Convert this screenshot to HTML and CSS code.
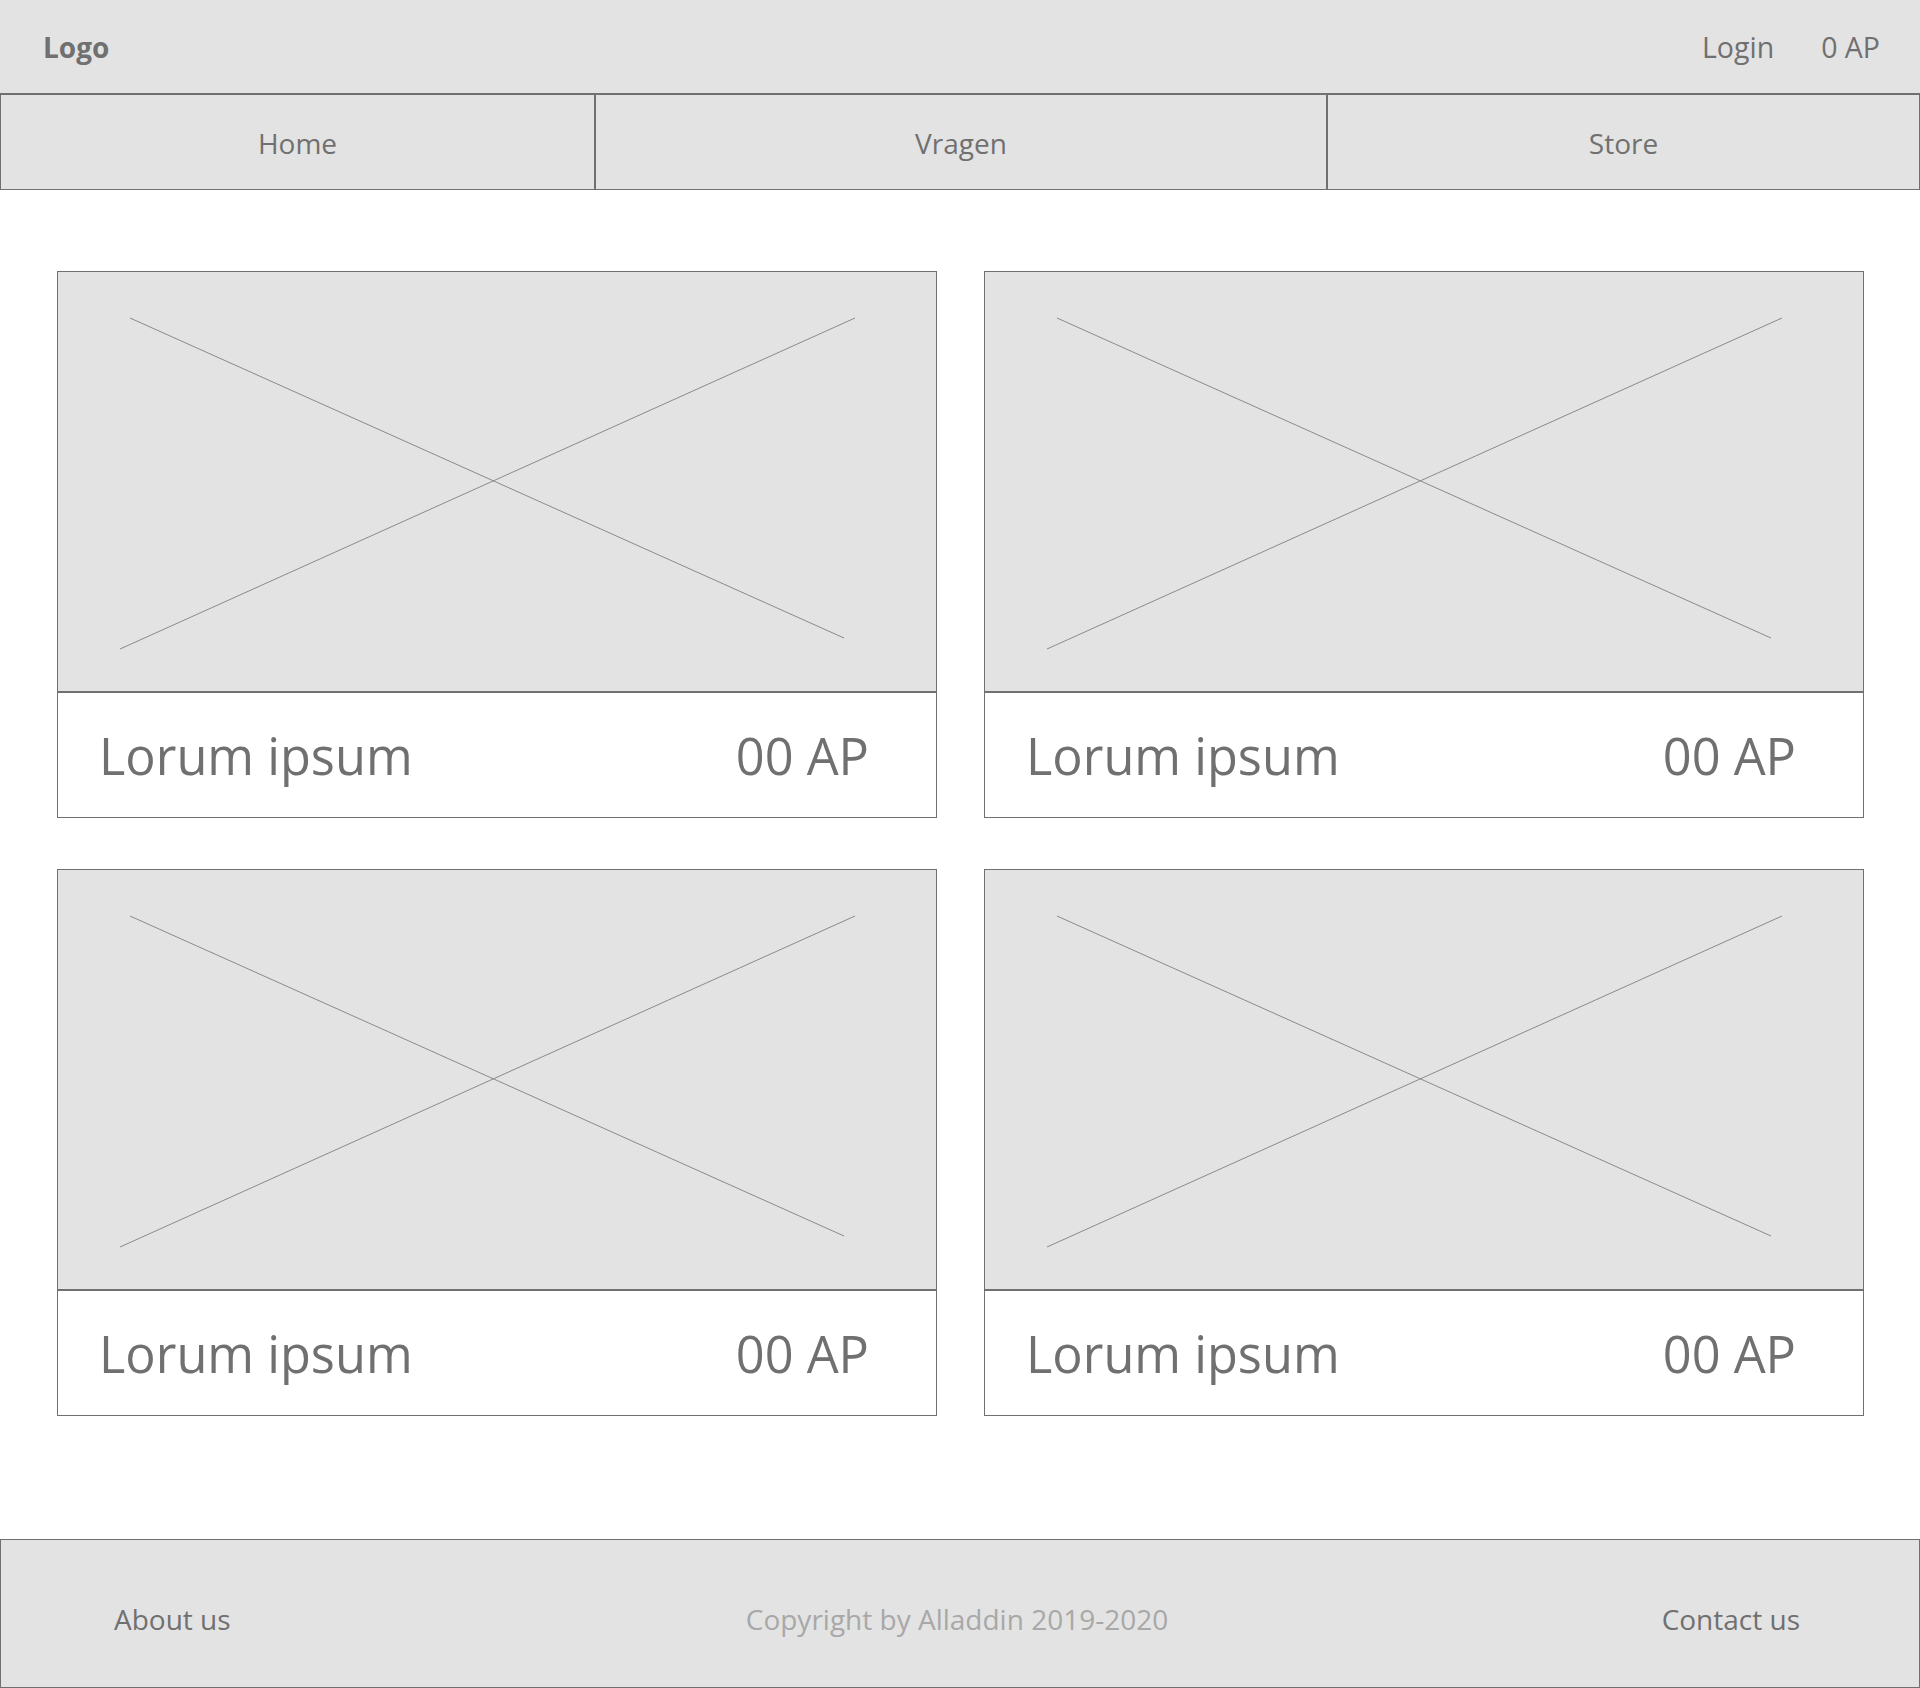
FILE: index.html
```html
<!DOCTYPE html>
<html lang="nl">
<head>
<meta charset="utf-8">
<title>Alladdin</title>
<link rel="stylesheet" href="styles.css">
</head>
<body>
<header class="topbar">
  <div class="logo">Logo</div>
  <div class="top-links">
    <span>Login</span>
    <span>0 AP</span>
  </div>
</header>
<nav class="nav">
  <a class="nav-item nav-home">Home</a>
  <a class="nav-item nav-vragen">Vragen</a>
  <a class="nav-item nav-store">Store</a>
</nav>
<main class="main">
  <div class="grid">
    <div class="card">
      <div class="card-img"><svg viewBox="0 0 878 419" preserveAspectRatio="none"><line x1="72" y1="46" x2="786" y2="366"/><line x1="62" y1="377" x2="797" y2="46"/></svg></div>
      <div class="card-body"><span>Lorum ipsum</span><span>00 AP</span></div>
    </div>
    <div class="card">
      <div class="card-img"><svg viewBox="0 0 878 419" preserveAspectRatio="none"><line x1="72" y1="46" x2="786" y2="366"/><line x1="62" y1="377" x2="797" y2="46"/></svg></div>
      <div class="card-body"><span>Lorum ipsum</span><span>00 AP</span></div>
    </div>
    <div class="card">
      <div class="card-img"><svg viewBox="0 0 878 419" preserveAspectRatio="none"><line x1="72" y1="46" x2="786" y2="366"/><line x1="62" y1="377" x2="797" y2="46"/></svg></div>
      <div class="card-body"><span>Lorum ipsum</span><span>00 AP</span></div>
    </div>
    <div class="card">
      <div class="card-img"><svg viewBox="0 0 878 419" preserveAspectRatio="none"><line x1="72" y1="46" x2="786" y2="366"/><line x1="62" y1="377" x2="797" y2="46"/></svg></div>
      <div class="card-body"><span>Lorum ipsum</span><span>00 AP</span></div>
    </div>
  </div>
</main>
<footer class="footer">
  <span class="f-left">About us</span>
  <span class="f-copy">Copyright by Alladdin 2019-2020</span>
  <span class="f-right">Contact us</span>
</footer>
</body>
</html>
```
FILE: styles.css
```css
* { box-sizing: border-box; }
html, body { margin: 0; padding: 0; }
body {
  font-family: "Open Sans", "Noto Sans", sans-serif;
  color: #707070;
  background: #ffffff;
  width: 1920px;
}
.topbar {
  height: 93px;
  background: #e3e3e3;
  display: flex;
  align-items: center;
  justify-content: space-between;
  padding: 0 40px 0 43px;
}
.logo {
  font-weight: 700;
  font-size: 28px;
}
.top-links {
  display: flex;
  gap: 47px;
  font-size: 28.5px;
}
.nav {
  display: grid;
  grid-template-columns: 595px 732px 1fr;
  height: 97px;
  background: #e3e3e3;
  border-top: 2px solid #707070;
  border-bottom: 1px solid #707070;
  border-left: 1px solid #707070;
  border-right: 1px solid #707070;
}
.nav-item {
  display: flex;
  align-items: center;
  justify-content: center;
  font-size: 28px;
  color: #707070;
  padding-top: 2px;
}
.nav-home, .nav-vragen { border-right: 2px solid #707070; }
.main {
  padding: 81px 56px 123px 57px;
}
.grid {
  display: grid;
  grid-template-columns: 880px 880px;
  column-gap: 47px;
  row-gap: 51px;
}
.card {
  border: 1px solid #707070;
  height: 547px;
  display: flex;
  flex-direction: column;
}
.card-img {
  height: 421px;
  flex: none;
  background: #e3e3e3;
  border-bottom: 2px solid #707070;
}
.card-img svg {
  display: block;
  width: 100%;
  height: 419px;
}
.card-img line {
  stroke: #8a8a8a;
  stroke-width: 1;
  vector-effect: non-scaling-stroke;
}
.card-body {
  flex: 1;
  display: flex;
  align-items: center;
  justify-content: space-between;
  padding: 0 67px 0 41px;
  font-size: 50.5px;
}
.footer {
  height: 149px;
  background: #e3e3e3;
  border: 1px solid #707070;
  display: grid;
  grid-template-columns: 1fr auto 1fr;
  align-items: center;
  padding: 10px 119px 0 113px;
  font-size: 28px;
}
.f-copy { color: #a8a8a8; }
.f-right { justify-self: end; }
```
